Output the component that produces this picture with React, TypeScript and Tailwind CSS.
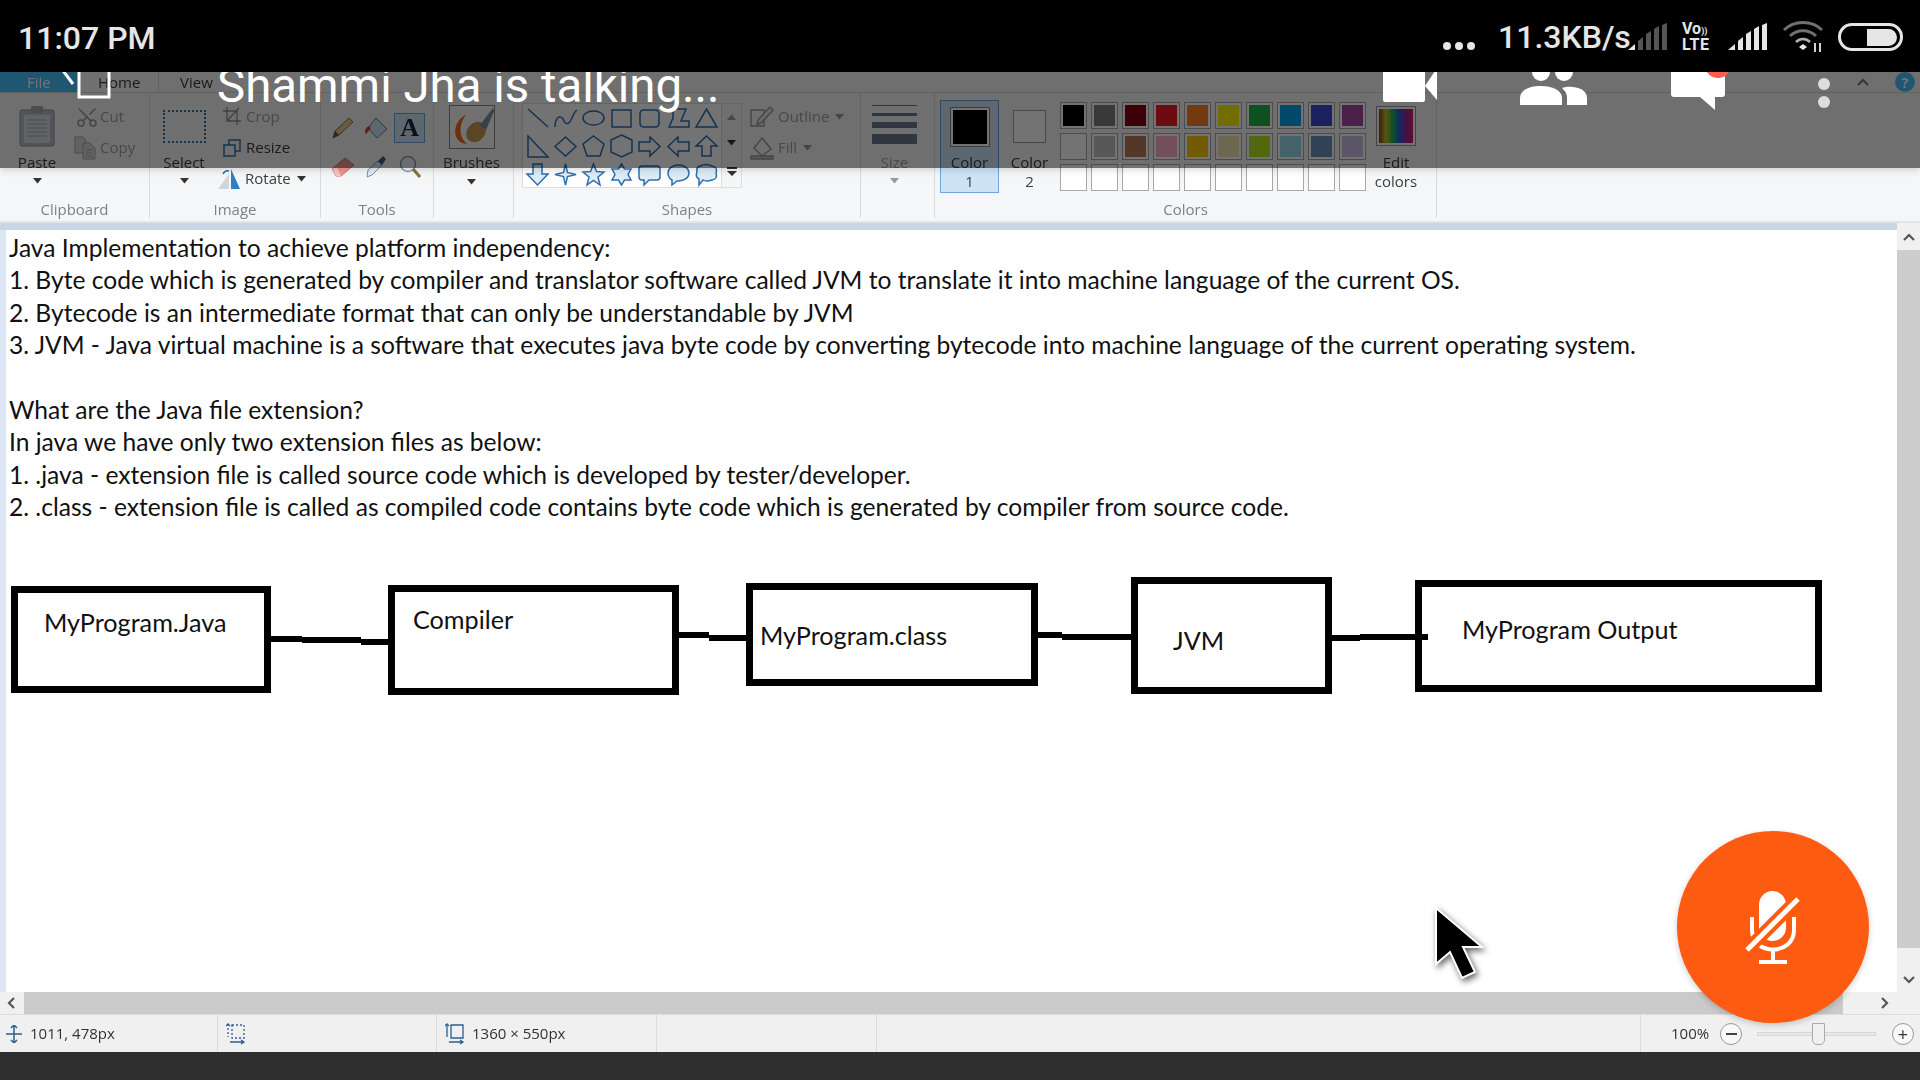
import { Scissors } from 'lucide-react';

const paintFont = "font-['Lato',sans-serif]";
const uiFont = "font-['Open_Sans',sans-serif]";

const paletteRow1 = ['#000000', '#7f7f7f', '#880015', '#ed1c24', '#ff7f27', '#fff200', '#22b14c', '#00a2e8', '#3f48cc', '#a349a4'];
const paletteRow2 = ['#ffffff', '#c3c3c3', '#b97a57', '#ffaec9', '#ffc90e', '#efe4b0', '#b5e61d', '#99d9ea', '#7092be', '#c8bfe7'];
const paletteRow3 = Array.from({ length: 10 }, () => 'transparent');

const shapes = [
  'M3 3L23 21',
  'M2 21C2 12 7 8 10 13C12 18 15 20 18 14C20 10 21 6 24 4',
  'M12.5 5C18.5 5 23 8 23 12S18.5 19 12.5 19S2 16 2 12S6.5 5 12.5 5Z',
  'M3 4H22V21H3Z',
  'M7 4H18Q22 4 22 8V17Q22 21 18 21H7Q3 21 3 17V8Q3 4 7 4Z',
  'M3 21L7 12V3H20L15 15H23V21Z',
  'M12.5 3L23 21H2Z',
  'M3 2L23 23H3Z',
  'M12.5 3L23 12.5L12.5 22L2 12.5Z',
  'M12.5 2L23 10L19 22H6L2 10Z',
  'M12.5 1L23 6V18L12.5 23L2 18V6Z',
  'M2 8H13V3L23 12.5L13 22V17H2Z',
  'M23 8H12V3L2 12.5L12 22V17H23Z',
  'M12.5 2L23 12H17V22H8V12H2Z',
  'M8 2H17V12H23L12.5 23L2 12H8Z',
  'M12.5 2L14.5 10.5L23 12.5L14.5 14.5L12.5 23L10.5 14.5L2 12.5L10.5 10.5Z',
  'M12.5 2L15.5 9.5L23 10L17 15L19 23L12.5 18.5L6 23L8 15L2 10L9.5 9.5Z',
  'M12.5 2L15.5 7H22L19 12.5L22 18H15.5L12.5 23L9.5 18H3L6 12.5L3 7H9.5Z',
  'M5 4H20Q23 4 23 7V15Q23 18 20 18H12L7 23V18H5Q2 18 2 15V7Q2 4 5 4Z',
  'M12.5 3C18.5 3 23 6.5 23 11S18.5 19 12.5 19H11L6 23V18C3.5 16.5 2 14 2 11C2 6.5 6.5 3 12.5 3Z',
  'M6 4Q12 1 18 4Q24 5 22 11Q24 17 18 18Q12 20 9 18L5 23V17Q1 15 3 10Q2 5 6 4Z',
];

function RibbonText({ children }: { children: React.ReactNode }) {
  return <span className="block text-[15px] leading-[19px] text-[#3c3c3c]">{children}</span>;
}

function GroupLabel({ children }: { children?: React.ReactNode }) {
  return <div className="mt-auto h-[23px] text-center text-[15px] leading-[28px] text-[#808080]">{children}</div>;
}

function DownArrow({ light }: { light?: boolean }) {
  return (
    <svg width="9" height="6" viewBox="0 0 9 6" className="shrink-0">
      <path d="M0 0H9L4.5 5.5Z" fill={light ? '#9a9a9a' : '#333333'} />
    </svg>
  );
}

function Swatch({ color, big }: { color: string; big?: boolean }) {
  return (
    <div className={big ? 'h-[33px] w-[33px] border border-[#a0a0a0] bg-white' : 'h-[27px] w-[27px] border border-[#a8a8a8] bg-white p-[2px]'}>
      {!big && <div className="h-full w-full" style={{ backgroundColor: color }} />}
    </div>
  );
}

function SignalBars({ dim }: { dim?: boolean }) {
  const bar = dim ? '#555555' : '#e6e6e6';
  return (
    <svg width="40" height="28" viewBox="0 0 40 28">
      <path d="M0 27L7 21V27Z" fill="#e6e6e6" />
      <path d="M10 18L15 14V27H10Z" fill={bar} />
      <path d="M18 11L23 8V27H18Z" fill={bar} />
      <path d="M26 6L31 3V27H26Z" fill={bar} />
      <path d="M34 2L39 0V27H34Z" fill={bar} />
    </svg>
  );
}

function StatusBar() {
  return (
    <div className="relative z-20 flex h-[72px] shrink-0 items-center bg-black pl-[18px] font-['Roboto',sans-serif] text-[32px] font-medium text-[#e6e6e6]">
      <span className="mt-[3px]">11:07 PM</span>
      <div className="ml-auto mr-[17px] mt-[2px] flex items-center">
        <div className="mt-[18px] flex gap-[4px]">
          <div className="h-[8px] w-[8px] rounded-full bg-[#e6e6e6]" />
          <div className="h-[8px] w-[8px] rounded-full bg-[#e6e6e6]" />
          <div className="h-[8px] w-[8px] rounded-full bg-[#e6e6e6]" />
        </div>
        <span className="ml-[23px] w-[127px] whitespace-nowrap">11.3KB/s</span>
        <div className="ml-[3px]"><SignalBars dim /></div>
        <div className="ml-[14px] flex w-[32px] flex-col text-[16px] font-bold leading-[14px] text-[#e6e6e6]">
          <span className="whitespace-nowrap">Vo<span className="text-[9px]">))</span></span>
          <span className="tracking-[0.6px]">LTE</span>
        </div>
        <div className="ml-[14px]"><SignalBars /></div>
        <svg width="42" height="32" viewBox="0 0 42 32" className="ml-[14px]" fill="none">
          <path d="M2 9C12 -1 30 -1 40 9" stroke="#707070" strokeWidth="3" />
          <path d="M8 15C15 8 27 8 34 15" stroke="#707070" strokeWidth="3" />
          <path d="M14 21C18 17 24 17 28 21" stroke="#b0b0b0" strokeWidth="2.5" />
          <path d="M17 26L21 23L25 26L21 29Z" fill="#e6e6e6" />
          <path d="M33 22V31M38 22V31" stroke="#d0d0d0" strokeWidth="2" />
        </svg>
        <div className="ml-[14px] flex h-[28px] w-[65px] items-center justify-end rounded-full border-[3px] border-[#e6e6e6] pr-[3px]">
          <div className="h-[17px] w-[30px] rounded-r-full rounded-l-[3px] bg-[#e6e6e6]" />
        </div>
      </div>
    </div>
  );
}

function TalkingOverlay() {
  return (
    <div className="absolute left-0 right-0 top-[72px] z-10 flex h-[96px] items-start overflow-hidden bg-black/55 shadow-[0_3px_6px_rgba(0,0,0,0.12)]">
      <svg width="52" height="28" viewBox="0 0 52 28" className="ml-[59px] shrink-0" fill="none" stroke="white" strokeWidth="3">
        <path d="M20 -4H2M2 -4L14 12" />
        <path d="M20 0V25H50V0" />
      </svg>
      <span className="-mt-[16px] ml-[106px] w-[1165px] shrink-0 whitespace-nowrap font-['Roboto',sans-serif] text-[47.4px] leading-[60px] text-white">
        Shammi Jha is talking...
      </span>
      <svg width="54" height="30" viewBox="0 0 54 30" className="ml-[1px] shrink-0" fill="white">
        <path d="M0 0H42V28Q42 30 40 30H2Q0 30 0 28Z" />
        <path d="M42 14L54 -4V28Z" />
      </svg>
      <svg width="67" height="33" viewBox="0 0 67 33" className="ml-[83px] shrink-0" fill="white">
        <circle cx="21" cy="0" r="9" />
        <circle cx="44" cy="0" r="9" />
        <path d="M0 33V26C0 18 9 14 21 14C32 14 42 18 42 26V33Z" />
        <path d="M47 33V25C47 21 44 18 42 16C50 13 67 15 67 26V33Z" />
      </svg>
      <div className="relative ml-[84px] h-[38px] w-[54px] shrink-0">
        <svg width="54" height="38" viewBox="0 0 54 38" fill="white" className="absolute left-0 top-0">
          <path d="M0 0H54V22Q54 25 51 25H44V38L29 25H3Q0 25 0 22Z" />
        </svg>
        <div className="absolute -top-[20px] left-[34px] h-[26px] w-[26px] rounded-full bg-[#ff5d4f]" />
      </div>
      <div className="ml-[93px] flex shrink-0 flex-col gap-[6px] pt-[6px]">
        <div className="h-[12px] w-[12px] rounded-full bg-[#dcdde2]" />
        <div className="h-[12px] w-[12px] rounded-full bg-[#dcdde2]" />
      </div>
    </div>
  );
}

function Ribbon() {
  return (
    <div className={`shrink-0 blur-[0.5px] ${uiFont}`}>
      <div className="flex h-[21px] items-center border-b border-[#d8d8d8] bg-[#f5f6f7] text-[15px] text-[#3c3c3c]">
        <div className="flex h-full w-[79px] items-center bg-[#46c0ff] pl-[27px] text-white">File</div>
        <div className="flex h-full w-[80px] items-center border-r border-[#d8d8d8] bg-[#f8f8f8] pl-[19px]">Home</div>
        <div className="ml-[21px]">View</div>
        <svg width="12" height="8" viewBox="0 0 12 8" className="ml-auto mr-[26px]" fill="none" stroke="#777" strokeWidth="2">
          <path d="M1 7L6 2L11 7" />
        </svg>
        <div className="mr-[5px] flex h-[20px] w-[20px] items-center justify-center rounded-full bg-[#46c0ff] text-[14px] font-bold text-white">?</div>
      </div>

      <div className="flex h-[130px] border-b-2 border-[#e2e4e7] bg-[#f5f6f7]">
        {/* Clipboard */}
        <div className="flex h-[125px] w-[150px] shrink-0 flex-col border-r border-[#dadbdc]">
          <div className="flex">
            <div className="flex w-[74px] flex-col items-center pt-[12px]">
              <svg width="36" height="42" viewBox="0 0 36 42">
                <rect x="1" y="5" width="34" height="36" rx="2" fill="#b4bcc6" stroke="#909090" />
                <rect x="5" y="10" width="26" height="28" fill="#d8dce0" />
                <rect x="12" y="1" width="12" height="7" rx="1" fill="#a8a8a8" />
                <path d="M8 15H28M8 19H28M8 23H28M8 27H28M8 31H28" stroke="#a0a8b0" />
              </svg>
              <div className="mt-[6px]"><RibbonText>Paste</RibbonText></div>
              <div className="mt-[6px]"><DownArrow /></div>
            </div>
            <div className="flex flex-col pt-[8px]">
              <div className="flex h-[31px] items-center">
                <Scissors size={24} strokeWidth={1.5} className="w-[26px] -rotate-90 text-[#9a9a9a]" />
                <span className="text-[15px] text-[#a0a0a0]">Cut</span>
              </div>
              <div className="flex h-[31px] items-center">
                <svg width="22" height="24" viewBox="0 0 22 24" className="mr-[4px]" fill="#d8d8d8" stroke="#a8a8a8">
                  <path d="M1 1H9L12 4V17H1Z" />
                  <path d="M9 7H16L21 12V23H9Z" />
                  <path d="M12 14H18M12 17H18M12 20H18" />
                </svg>
                <span className="text-[15px] text-[#a0a0a0]">Copy</span>
              </div>
            </div>
          </div>
          <GroupLabel>Clipboard</GroupLabel>
        </div>

        {/* Image */}
        <div className="flex h-[125px] w-[171px] shrink-0 flex-col border-r border-[#dadbdc]">
          <div className="flex">
            <div className="flex w-[68px] flex-col items-center pt-[17px]">
              <div className="h-[33px] w-[43px] border-2 border-dotted border-[#2f6fb0] bg-[#f5f6f7]" />
              <div className="mt-[10px]"><RibbonText>Select</RibbonText></div>
              <div className="mt-[6px]"><DownArrow /></div>
            </div>
            <div className="flex flex-col pt-[8px]">
              <div className="flex h-[31px] items-center pl-[5px]">
                <svg width="18" height="22" viewBox="0 0 18 22" className="mr-[5px]" fill="none" stroke="#909090" strokeWidth="1.3">
                  <path d="M0 5H14V19M4 1V15H18M16 2L4 15" />
                </svg>
                <span className="text-[15px] text-[#a0a0a0]">Crop</span>
              </div>
              <div className="flex h-[31px] items-center pl-[5px]">
                <svg width="18" height="18" viewBox="0 0 18 18" className="mr-[5px]" fill="none" stroke="#2f6fb0" strokeWidth="1.5">
                  <path d="M6 6V1H17V12H12" />
                  <path d="M1 6H12V17H1Z" />
                </svg>
                <RibbonText>Resize</RibbonText>
              </div>
              <div className="flex h-[31px] items-center">
                <svg width="22" height="22" viewBox="0 0 22 22" className="mr-[5px]">
                  <path d="M13 1V21H22Z" fill="#2f7fc8" />
                  <path d="M11 6V21H0Z" fill="#d0d6dc" />
                  <path d="M5 6Q7 2 11 3" fill="none" stroke="#2f6fb0" strokeWidth="1.5" />
                </svg>
                <RibbonText>Rotate</RibbonText>
                <div className="ml-[6px]"><DownArrow /></div>
              </div>
            </div>
          </div>
          <GroupLabel>Image</GroupLabel>
        </div>

        {/* Tools */}
        <div className="flex h-[125px] w-[113px] shrink-0 flex-col border-r border-[#dadbdc]">
          <div className="grid grid-cols-[repeat(3,33.5px)] grid-rows-[repeat(2,39px)] place-items-center pl-[5px] pt-[15px]">
            <svg width="22" height="22" viewBox="0 0 22 22">
              <path d="M17 1L21 5L7 18L1 21L3 14Z" fill="#e8c890" stroke="#8a7040" />
              <path d="M3 14L7 18L1 21Z" fill="#555" />
            </svg>
            <svg width="24" height="24" viewBox="0 0 24 24">
              <path d="M12 2L23 13L13 22L4 12Z" fill="#d0e4f4" stroke="#5c7a99" />
              <path d="M5 10C1 12 0 16 2 18C4 16 5 14 7 12Z" fill="#e04030" />
            </svg>
            <div className="flex h-[30px] w-[31px] items-center justify-center border border-[#6ea5dc] bg-[#cde4f7] font-['Liberation_Serif',serif] text-[26px] font-bold leading-none text-[#223]">A</div>
            <svg width="24" height="20" viewBox="0 0 24 20">
              <path d="M1 12L14 1L23 8L10 19H5Z" fill="#f3958d" stroke="#d07068" />
              <path d="M1 12L5 19H10L6 10Z" fill="#f7c5bf" />
            </svg>
            <svg width="22" height="24" viewBox="0 0 22 24">
              <path d="M3 15L13 6L17 10L7 20L2 22Z" fill="#e0ecf6" stroke="#7c90a8" />
              <path d="M13 6L18 1L21 4L17 10Z" fill="#2f6090" />
            </svg>
            <svg width="22" height="24" viewBox="0 0 22 24" fill="none">
              <circle cx="9" cy="9" r="7.5" fill="#eef4f8" stroke="#8a9aa8" strokeWidth="1.5" />
              <path d="M14 14L21 22" stroke="#8a7040" strokeWidth="3" />
            </svg>
          </div>
          <GroupLabel>Tools</GroupLabel>
        </div>

        {/* Brushes */}
        <div className="flex h-[125px] w-[80px] shrink-0 flex-col border-r border-[#dadbdc]">
          <div className="flex flex-col items-center pr-[4px] pt-[12px]">
            <svg width="46" height="44" viewBox="0 0 46 44">
              <rect x="0.5" y="0.5" width="45" height="43" fill="#fafafa" stroke="#888" />
              <path d="M17 10C3 16 2 38 18 39C10 32 9 20 17 10Z" fill="#f06a1a" />
              <ellipse cx="27" cy="27" rx="9" ry="11" transform="rotate(40 27 27)" fill="#c89a50" />
              <path d="M31 20L44 3L45 6L37 25Z" fill="#7a8ca0" />
            </svg>
            <div className="mt-[4px]"><RibbonText>Brushes</RibbonText></div>
            <div className="mt-[7px]"><DownArrow /></div>
          </div>
          <GroupLabel />
        </div>

        {/* Shapes */}
        <div className="flex h-[125px] w-[347px] shrink-0 flex-col border-r border-[#dadbdc]">
          <div className="flex pl-[8px] pt-[10px]">
            <div className="flex h-[85px] w-[220px] border border-[#dedede] bg-white">
              <div className="grid h-fit grid-cols-[repeat(7,28.2px)] grid-rows-[repeat(3,28px)] place-items-center">
                {shapes.map((d, i) => (
                  <svg key={d} width="25" height="25" viewBox="0 0 25 25" fill={d.endsWith('Z') && i > 13 ? '#dcecf6' : 'none'} stroke="#2f6fb0" strokeWidth="1.5">
                    <path d={d} />
                  </svg>
                ))}
              </div>
              <div className="ml-auto flex w-[20px] flex-col items-center justify-around border-l border-[#dedede] bg-[#f5f6f7] text-[#555]">
                <svg width="9" height="6" viewBox="0 0 9 6"><path d="M0 6H9L4.5 0.5Z" fill="#a0a0a0" /></svg>
                <DownArrow />
                <svg width="10" height="10" viewBox="0 0 10 10"><path d="M0 0H10V2H0ZM0 4H10L5 9Z" fill="#333" /></svg>
              </div>
            </div>
            <div className="ml-[8px] -mt-[2px] flex flex-col">
              <div className="flex h-[31px] items-center">
                <svg width="24" height="24" viewBox="0 0 24 24" className="mr-[4px]" fill="none" stroke="#999" strokeWidth="1.4">
                  <path d="M1 5H14V21H1Z" />
                  <path d="M8 15L20 2L23 5L11 18L7 19Z" fill="#eee" />
                </svg>
                <span className="text-[15px] text-[#a0a0a0]">Outline</span>
                <div className="ml-[6px]"><DownArrow light /></div>
              </div>
              <div className="flex h-[31px] items-center">
                <svg width="24" height="24" viewBox="0 0 24 24" className="mr-[4px]" fill="none" stroke="#999" strokeWidth="1.4">
                  <path d="M12 2L21 13L12 20L4 12Z" />
                  <path d="M1 20H23V23H1Z" fill="#b4c8dc" />
                </svg>
                <span className="text-[15px] text-[#a0a0a0]">Fill</span>
                <div className="ml-[6px]"><DownArrow light /></div>
              </div>
            </div>
          </div>
          <GroupLabel>Shapes</GroupLabel>
        </div>

        {/* Size */}
        <div className="flex h-[125px] w-[74px] shrink-0 flex-col border-r border-[#dadbdc]">
          <div className="flex flex-col items-center pr-[6px] pt-[12px]">
            <div className="h-[1px] w-[45px] bg-[#6a7a90]" />
            <div className="mt-[7px] h-[3px] w-[45px] bg-[#6a7a90]" />
            <div className="mt-[6px] h-[6px] w-[45px] bg-[#6a7a90]" />
            <div className="mt-[6px] h-[10px] w-[45px] bg-[#6a7a90]" />
            <span className="mt-[9px] block text-[15px] leading-[19px] text-[#a0a0a0]">Size</span>
            <div className="mt-[6px]"><DownArrow light /></div>
          </div>
          <GroupLabel />
        </div>

        {/* Colors */}
        <div className="flex h-[125px] w-[502px] shrink-0 flex-col border-r border-[#dadbdc]">
          <div className="flex pl-[5px] pt-[7px]">
            <div className="flex h-[93px] w-[59px] shrink-0 flex-col items-center border border-[#6ea5dc] bg-[#cde4f7] pt-[6px]">
              <div className="h-[40px] w-[40px] border border-[#888] bg-white p-[2px]">
                <div className="h-full w-full bg-black" />
              </div>
              <div className="mt-[6px] text-center"><RibbonText>Color<br />1</RibbonText></div>
            </div>
            <div className="flex w-[61px] shrink-0 flex-col items-center pt-[10px]">
              <Swatch color="#fff" big />
              <div className="mt-[10px] text-center"><RibbonText>Color<br />2</RibbonText></div>
            </div>
            <div className="flex w-[310px] shrink-0 flex-col gap-[4px] pt-[2px]">
              {[paletteRow1, paletteRow2, paletteRow3].map((row, i) => (
                <div key={i} className="flex gap-[4px]">
                  {row.map((c, j) => <Swatch key={j} color={c} />)}
                </div>
              ))}
            </div>
            <div className="ml-[1px] flex w-[50px] flex-col items-center pt-[6px]">
              <div className="h-[40px] w-[40px] border border-[#999] bg-white p-[2px]">
                <div className="h-full w-full bg-[linear-gradient(90deg,#7a4a20,#c8c020,#20b050,#2060d0,#a020a0,#d02060)]" />
              </div>
              <div className="mt-[7px] text-center"><RibbonText>Edit<br />colors</RibbonText></div>
            </div>
          </div>
          <GroupLabel>Colors</GroupLabel>
        </div>
      </div>
    </div>
  );
}

function Box({ className, children }: { className: string; children: string }) {
  return (
    <div className={`absolute border-[7px] border-black text-[25.2px] leading-[32px] text-[#111] ${className}`}>{children}</div>
  );
}

function Canvas() {
  return (
    <div className={`relative flex-1 bg-white pl-[3px] pt-[2px] text-[24.6px] leading-[32.4px] text-[#111] ${paintFont}`}>
      <p>Java Implementation to achieve platform independency:</p>
      <p>1. Byte code which is generated by compiler and translator software called JVM to translate it into machine language of the current OS.</p>
      <p>2. Bytecode is an intermediate format that can only be understandable by JVM</p>
      <p>3. JVM - Java virtual machine is a software that executes java byte code by converting bytecode into machine language of the current operating system.</p>
      <p className="mt-[32.4px]">What are the Java file extension?</p>
      <p>In java we have only two extension files as below:</p>
      <p>1. .java - extension file is called source code which is developed by tester/developer.</p>
      <p>2. .class - extension file is called as compiled code contains byte code which is generated by compiler from source code.</p>

      <svg width="1891" height="762" viewBox="6 230 1891 762" className="absolute left-0 top-0">
        <rect x="271" y="636" width="31" height="6" />
        <rect x="302" y="637" width="59" height="6" />
        <rect x="361" y="639" width="27" height="6" />
        <rect x="679" y="632" width="30" height="6" />
        <rect x="709" y="635" width="37" height="6" />
        <rect x="1038" y="632" width="24" height="6" />
        <rect x="1062" y="634" width="69" height="6" />
        <rect x="1332" y="635" width="28" height="6" />
        <rect x="1360" y="634" width="68" height="6" />
      </svg>
      <Box className="left-[5px] top-[356px] h-[107px] w-[260px] pl-[26px] pt-[13px]">MyProgram.Java</Box>
      <Box className="left-[382px] top-[355px] h-[110px] w-[291px] pl-[18px] pt-[11px]">Compiler</Box>
      <Box className="left-[740px] top-[353px] h-[103px] w-[292px] pl-[7px] pt-[29px]">MyProgram.class</Box>
      <Box className="left-[1125px] top-[347px] h-[117px] w-[201px] pl-[35px] pt-[40px]">JVM</Box>
      <Box className="left-[1409px] top-[350px] h-[112px] w-[407px] pl-[40px] pt-[26px]">MyProgram Output</Box>
    </div>
  );
}

function PaintStatus() {
  return (
    <div className={`flex h-[38px] shrink-0 items-center border-t border-[#dcdcdc] bg-[#f0f0f0] text-[15px] text-[#333] blur-[0.4px] ${uiFont}`}>
      <div className="flex h-full w-[218px] items-center gap-[8px] border-r border-[#dcdcdc] pl-[6px]">
        <svg width="16" height="18" viewBox="0 0 16 18" fill="none" stroke="#2f5f90" strokeWidth="1.5">
          <path d="M8 0V18M0 9H16" />
          <path d="M5 3L8 0L11 3M5 15L8 18L11 15" />
        </svg>
        <span>1011, 478px</span>
      </div>
      <div className="flex h-full w-[219px] items-center border-r border-[#dcdcdc] pl-[8px]">
        <svg width="20" height="22" viewBox="0 0 20 22" fill="none" stroke="#2f5f90" strokeWidth="1.3">
          <path d="M2 1V14M6 2H18V15H6Z" strokeDasharray="2 2" />
          <path d="M4 19H18M15 17L18 19L15 21M0 3L2 1L4 3" />
        </svg>
      </div>
      <div className="flex h-full w-[220px] items-center gap-[7px] border-r border-[#dcdcdc] pl-[8px]">
        <svg width="20" height="22" viewBox="0 0 20 22" fill="none" stroke="#2f5f90" strokeWidth="1.3">
          <path d="M2 1V14M6 2H18V15H6Z" />
          <path d="M4 19H18M15 17L18 19L15 21M0 3L2 1L4 3" />
        </svg>
        <span>1360 × 550px</span>
      </div>
      <div className="h-full w-[220px] border-r border-[#dcdcdc]" />
      <div className="h-full w-[764px] border-r border-[#dcdcdc]" />
      <span className="ml-[30px] w-[42px] whitespace-nowrap">100%</span>
      <div className="ml-[7px] flex h-[22px] w-[22px] items-center justify-center rounded-full border border-[#999] bg-[#f8f8f8]">
        <div className="h-[2px] w-[11px] bg-[#444]" />
      </div>
      <div className="relative ml-[15px] h-[4px] w-[119px] border border-[#d8d8d8] bg-[#e8e8e8]">
        <div className="absolute -top-[10px] left-[54px] h-[22px] w-[13px] rounded-b-[5px] border border-[#aaa] bg-[#f0f0f0]" />
      </div>
      <div className="ml-[16px] flex h-[22px] w-[22px] items-center justify-center rounded-full border border-[#999] bg-[#f8f8f8] text-[18px] leading-none">+</div>
    </div>
  );
}

function MuteButton() {
  return (
    <div className="absolute left-[1677px] top-[831px] z-10 flex h-[192px] w-[192px] items-center justify-center rounded-full bg-[#fd5a12] shadow-[0_2px_6px_rgba(0,0,0,0.2)]">
      <svg width="58" height="78" viewBox="0 0 58 78">
        <rect x="15" y="3" width="27" height="50" rx="13.5" fill="white" />
        <path d="M8 29V42C8 70 50 70 50 42V29" fill="none" stroke="#fd5a12" strokeWidth="9" />
        <path d="M8 29V42C8 68 50 68 50 42V29" fill="none" stroke="white" strokeWidth="4" />
        <rect x="27" y="60" width="4" height="13" fill="white" />
        <rect x="15" y="72" width="28" height="4" fill="white" />
        <path d="M3 62L54 11" stroke="#fd5a12" strokeWidth="13" />
        <path d="M3 62L54 11" stroke="white" strokeWidth="5" />
      </svg>
    </div>
  );
}

export default function App() {
  return (
    <div className="relative flex h-[1080px] w-[1920px] flex-col overflow-hidden bg-white">
      <StatusBar />
      <TalkingOverlay />
      <Ribbon />

      <div className="flex min-h-0 flex-1">
        <div className="flex min-w-0 flex-1 flex-col">
          <div className="h-[7px] shrink-0 bg-[#c9d5e5]" />
          <div className="flex min-h-0 flex-1">
            <div className="w-[6px] shrink-0 bg-[#dce6f4]" />
            <Canvas />
          </div>
        </div>
        <div className="flex w-[23px] shrink-0 flex-col items-center bg-[#f0f0f0] text-[#555]">
          <svg width="12" height="8" viewBox="0 0 12 8" className="mt-[10px]" fill="none" stroke="#555" strokeWidth="2.2"><path d="M1 7L6 2L11 7" /></svg>
          <div className="mt-[9px] h-[698px] w-full bg-[#cdcdcd]" />
          <svg width="12" height="8" viewBox="0 0 12 8" className="mt-[28px]" fill="none" stroke="#555" strokeWidth="2.2"><path d="M1 1L6 6L11 1" /></svg>
        </div>
      </div>

      <div className="flex h-[22px] shrink-0 items-center bg-[#f0f0f0]">
        <svg width="24" height="12" viewBox="0 0 24 12" fill="none" stroke="#555" strokeWidth="2.2"><path d="M14 1L9 6L14 11" /></svg>
        <div className="h-full w-[1819px] bg-[#cacaca]" />
        <svg width="12" height="12" viewBox="0 0 12 12" className="ml-[36px]" fill="none" stroke="#555" strokeWidth="2.2"><path d="M3 1L8 6L3 11" /></svg>
      </div>

      <PaintStatus />
      <div className="h-[28px] shrink-0 bg-[#2f2f2f]" />

      <MuteButton />
      {/* mouse pointer from the shared screen */}
      <svg width="60" height="84" viewBox="0 0 60 84" className="absolute left-[1429px] top-[902px] z-10 drop-shadow-[2px_3px_3px_rgba(0,0,0,0.6)]">
        <path d="M7 6V62L21 50L33 76L46 70L34 45H53Z" fill="black" stroke="white" strokeWidth="2" />
      </svg>
    </div>
  );
}
